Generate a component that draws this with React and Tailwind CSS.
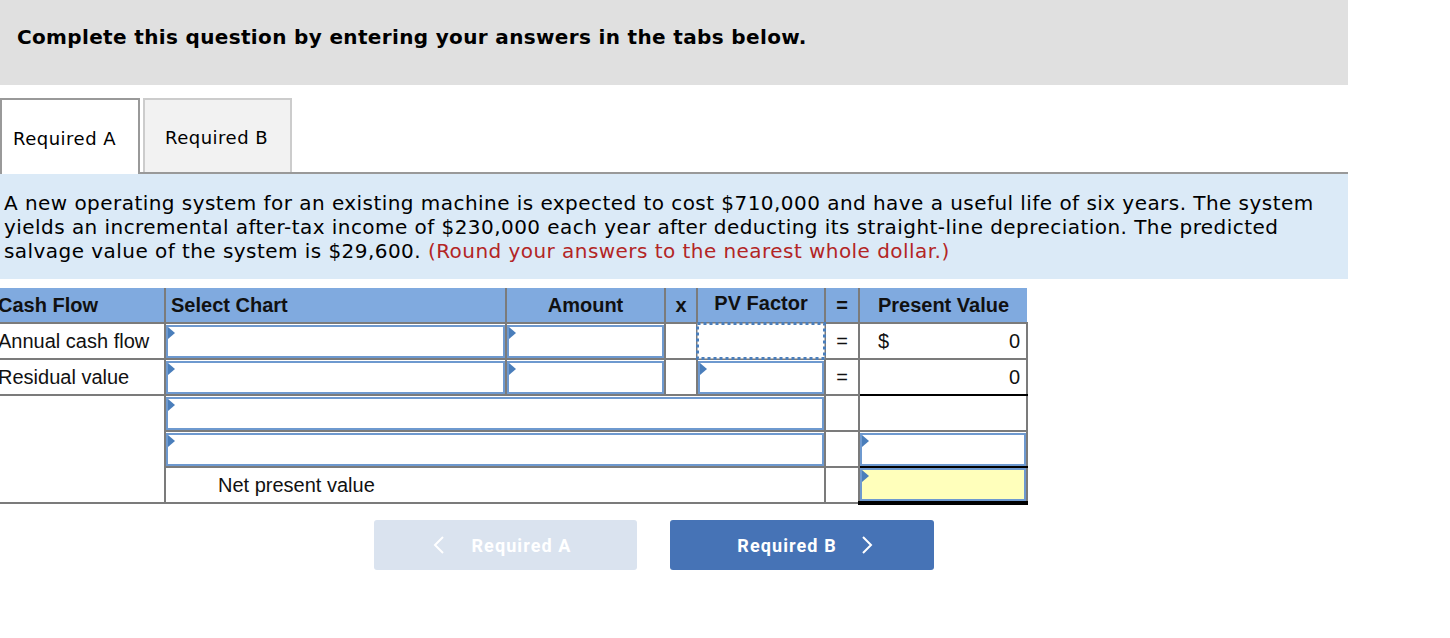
import React from "react"

const Marker = () => (
  <span className="absolute top-0 left-0 w-0 h-0 border-y-[6px] border-y-transparent border-l-[7px] border-l-[#4a7ebb]"></span>
)

const Field = ({ yellow }) => (
  <div className={`relative h-[33px] border-2 border-[#6e99cf] ${yellow ? "bg-[#ffffbb]" : "bg-white"}`}>
    <Marker />
  </div>
)

const Chevron = ({ dir }) => (
  <svg width="12" height="18" viewBox="0 0 12 18" className="shrink-0">
    <polyline
      points={dir === "left" ? "10,1 2,9 10,17" : "2,1 10,9 2,17"}
      fill="none"
      stroke="white"
      strokeWidth="2"
    />
  </svg>
)

const cell = "border-2 border-[#7b7b7b] p-0"

const App = () => {
  return (
    <div className="w-[1450px] h-[638px] bg-white overflow-hidden" style={{ fontFamily: "'DejaVu Sans', Verdana, sans-serif" }}>
      <div className="w-[1348px]">
        {/* header */}
        <div className="h-[85px] bg-[#e0e0e0] pl-[17px] pt-[24px]">
          <h1 className="text-[20px] tracking-[0.35px] font-bold text-black leading-[26px]">
            Complete this question by entering your answers in the tabs below.
          </h1>
        </div>

        {/* tabs */}
        <div className="flex items-end mt-[13px] h-[76px] border-b-2 border-[#999]">
          <div className="h-[76px] w-[140px] border-2 border-b-0 border-[#999] bg-white -mb-[2px] pl-[11px] pt-[25px] text-[18px] tracking-[0.5px] text-black">
            Required A
          </div>
          <div className="h-[74px] w-[149px] ml-[3px] border-2 border-b-0 border-[#ccc] bg-[#f2f2f2] pl-[20px] pt-[24px] text-[18px] tracking-[0.5px] text-black">
            Required B
          </div>
        </div>

        {/* question */}
        <div className="bg-[#dbeaf7] h-[105px] pl-[4px] pt-[17px] text-[20px] tracking-[0.45px] leading-[24px] text-black">
          A new operating system for an existing machine is expected to cost $710,000 and have a useful life of six years. The system
          <br />
          yields an incremental after-tax income of $230,000 each year after deducting its straight-line depreciation. The predicted
          <br />
          salvage value of the system is $29,600. <span className="text-[#b32525]">(Round your answers to the nearest whole dollar.)</span>
        </div>
      </div>

      {/* table */}
      <div className="mt-[9px] -ml-[6px]" style={{ fontFamily: "'Liberation Sans', Arial, sans-serif" }}>
        <table className="border-collapse text-[20px] text-[#111]" style={{ tableLayout: "fixed" }}>
          <colgroup>
            <col className="w-[171px]" />
            <col className="w-[341px]" />
            <col className="w-[159px]" />
            <col className="w-[32px]" />
            <col className="w-[128px]" />
            <col className="w-[34px]" />
            <col className="w-[168px]" />
          </colgroup>
          <thead>
            <tr className="h-[34px] bg-[#80aadf] font-bold">
              <th className="border-r-2 border-b-2 border-[#7b7b7b] text-left pl-[4px] font-bold">Cash Flow</th>
              <th className={`${cell} border-t-0 text-left pl-[5px] font-bold`}>Select Chart</th>
              <th className={`${cell} border-t-0 text-center font-bold`}>Amount</th>
              <th className={`${cell} border-t-0 text-center font-bold`}>x</th>
              <th className={`${cell} border-t-0 text-center font-bold pb-[4px]`}>PV Factor</th>
              <th className={`${cell} border-t-0 text-center font-bold`}>=</th>
              <th className={`${cell} border-t-0 border-r-0 text-center font-bold`}>Present Value</th>
            </tr>
          </thead>
          <tbody>
            <tr className="h-[36px]">
              <td className="border-r-2 border-b-2 border-[#7b7b7b] pl-[4px]">Annual cash flow</td>
              <td className={cell}><Field /></td>
              <td className={cell}><Field /></td>
              <td className={cell}></td>
              <td className={`${cell} relative`}>
                <svg className="absolute z-10 -left-[2px] -top-[2px]" width="130" height="38" viewBox="0 0 130 38">
                  <rect x="1.5" y="1.5" width="127" height="35" fill="white" stroke="#4a7ebb" strokeWidth="3" strokeDasharray="3 3" />
                </svg>
              </td>
              <td className={`${cell} text-center`}>=</td>
              <td className={`${cell} border-r-2 border-b-2 bg-white`}>
                <div className="flex justify-between pl-[18px] pr-[6px]">
                  <span>$</span>
                  <span>0</span>
                </div>
              </td>
            </tr>
            <tr className="h-[36px]">
              <td className="border-r-2 border-b-2 border-[#7b7b7b] pl-[4px]">Residual value</td>
              <td className={cell}><Field /></td>
              <td className={cell}><Field /></td>
              <td className={cell}></td>
              <td className={cell}><Field /></td>
              <td className={`${cell} text-center`}>=</td>
              <td className={`${cell} border-b-black text-right pr-[6px]`}>0</td>
            </tr>
            <tr className="h-[36px]">
              <td className="border-r-2 border-[#7b7b7b]"></td>
              <td className={cell} colSpan={4}><Field /></td>
              <td className={cell}></td>
              <td className={`${cell} border-t-black`}></td>
            </tr>
            <tr className="h-[36px]">
              <td className="border-r-2 border-[#7b7b7b]"></td>
              <td className={cell} colSpan={4}><Field /></td>
              <td className={cell}></td>
              <td className={`${cell} border-b-black`}><Field /></td>
            </tr>
            <tr className="h-[36px]">
              <td className="border-r-2 border-b-2 border-[#7b7b7b]"></td>
              <td className={`${cell} pl-[52px]`} colSpan={4}>Net present value</td>
              <td className={cell}></td>
              <td className={`${cell} border-t-black border-b-4 border-b-black`}><Field yellow /></td>
            </tr>
          </tbody>
        </table>
      </div>

      {/* nav buttons */}
      <div className="flex ml-[374px] mt-[15px] gap-[33px]" style={{ fontFamily: "Roboto, sans-serif" }}>
        <button className="w-[263px] h-[50px] rounded-[3px] bg-[#dae3ef] text-white font-bold text-[18px] tracking-[1.1px] flex items-center justify-center gap-[26px] pr-[6px]">
          <Chevron dir="left" />
          <span>Required A</span>
        </button>
        <button className="w-[264px] h-[50px] rounded-[3px] bg-[#4673b6] text-white font-bold text-[18px] tracking-[1.1px] flex items-center justify-center gap-[24px] pl-[6px]">
          <span>Required B</span>
          <Chevron dir="right" />
        </button>
      </div>
    </div>
  )
}

export default App
